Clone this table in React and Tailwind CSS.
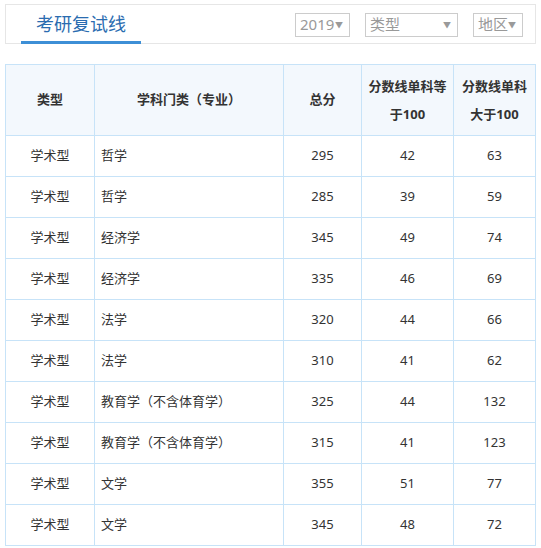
import React from "react";

const rows = [
  ["学术型", "哲学", "295", "42", "63"],
  ["学术型", "哲学", "285", "39", "59"],
  ["学术型", "经济学", "345", "49", "74"],
  ["学术型", "经济学", "335", "46", "69"],
  ["学术型", "法学", "320", "44", "66"],
  ["学术型", "法学", "310", "41", "62"],
  ["学术型", "教育学（不含体育学）", "325", "44", "132"],
  ["学术型", "教育学（不含体育学）", "315", "41", "123"],
  ["学术型", "文学", "355", "51", "77"],
  ["学术型", "文学", "345", "48", "72"],
];

const font = { fontFamily: '"Noto Sans", "Noto Sans CJK SC", sans-serif' };

function Sel({ label, w }) {
  return (
    <div
      className={`h-[24px] shrink-0 whitespace-nowrap border border-[#cccccc] flex items-center justify-between pl-[4px] pr-[6px] text-[#999999] text-[15px] leading-none ${w}`}
    >
      <span>{label}</span>
      <span className="text-[8px] text-[#9a9a9a]">▼</span>
    </div>
  );
}

export default function App() {
  return (
    <div className="bg-white w-[541px] h-[548px] pt-[4px] pl-[5px]" style={font}>
      <div className="w-[531px] h-[40px] border border-[#e6e6e6] flex items-stretch">
        <div className="ml-[15px] w-[120px] shrink-0 whitespace-nowrap border-b-[3px] border-[#3d8fd6] -mb-px flex items-center justify-center text-[18px] text-[#2a6cb0] pt-[2px]">
          考研复试线
        </div>
        <div className="ml-auto flex items-center gap-[15px] pr-[12px] pt-[1px]">
          <Sel label="2019" w="w-[55px]" />
          <Sel label="类型" w="w-[93px]" />
          <Sel label="地区" w="w-[50px]" />
        </div>
      </div>
      <table className="mt-[20px] w-[530px] border-collapse text-[13px] text-[#333333] table-fixed">
        <colgroup>
          <col className="w-[89px]" />
          <col className="w-[189px]" />
          <col className="w-[78px]" />
          <col className="w-[92px]" />
          <col className="w-[82px]" />
        </colgroup>
        <thead>
          <tr className="bg-[#f3f8fd] h-[71px] font-bold">
            <th className="border border-[#c7e3f8] font-bold">类型</th>
            <th className="border border-[#c7e3f8] font-bold">学科门类（专业）</th>
            <th className="border border-[#c7e3f8] font-bold">总分</th>
            <th className="border border-[#c7e3f8] font-bold leading-[28px] px-[4px]">分数线单科等于100</th>
            <th className="border border-[#c7e3f8] font-bold leading-[28px] px-[8px]">分数线单科大于100</th>
          </tr>
        </thead>
        <tbody>
          {rows.map((r, i) => (
            <tr key={i} className="h-[41px]">
              <td className="border border-[#c7e3f8] text-center">{r[0]}</td>
              <td className="border border-[#c7e3f8] pl-[6px]">{r[1]}</td>
              <td className="border border-[#c7e3f8] text-center">{r[2]}</td>
              <td className="border border-[#c7e3f8] text-center">{r[3]}</td>
              <td className="border border-[#c7e3f8] text-center">{r[4]}</td>
            </tr>
          ))}
        </tbody>
      </table>
    </div>
  );
}
